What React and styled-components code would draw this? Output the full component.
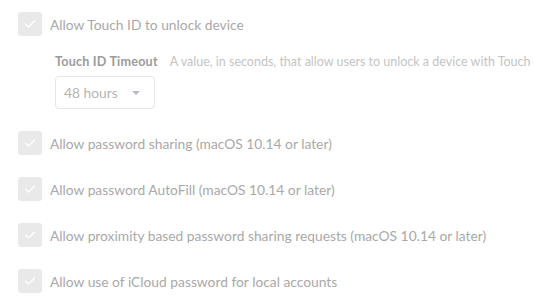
import { createGlobalStyle, styled } from "styled-components";

const Global = createGlobalStyle`
    body {
        margin: 0;
        background: #fff;
        font-family: Lato, "Open Sans", sans-serif;
    }
`;

const settings = [
    "Allow password sharing (macOS 10.14 or later)",
    "Allow password AutoFill (macOS 10.14 or later)",
    "Allow proximity based password sharing requests (macOS 10.14 or later)",
    "Allow use of iCloud password for local accounts",
];

const Check = () => (
    <Box>
        <svg width="12" height="10" viewBox="0 0 12 10">
            <path d="M1.5 5.2 L4.5 8 L10.5 2" fill="none" stroke="#fff" strokeWidth="1.3" strokeLinecap="round" strokeLinejoin="round" />
        </svg>
    </Box>
);

export default function App() {
    return (
        <>
            <Global />
            <Page>
                <Option>
                    <Check />
                    <Label>Allow Touch ID to unlock device</Label>
                </Option>
                <SubField>
                    <FieldHead>
                        <FieldName>Touch ID Timeout</FieldName>
                        <FieldHint>A value, in seconds, that allow users to unlock a device with Touch ID</FieldHint>
                    </FieldHead>
                    <Select>
                        <span>48 hours</span>
                        <Caret />
                    </Select>
                </SubField>
                {settings.map((s) => (
                    <Option key={s} $spaced>
                        <Check />
                        <Label>{s}</Label>
                    </Option>
                ))}
            </Page>
        </>
    );
}

const Page = styled.div`
    width: 534px;
    height: 302px;
    overflow: hidden;
    padding: 12px 0 0 18px;
    box-sizing: border-box;
`;

const Option = styled.div`
    display: flex;
    align-items: center;
    gap: 8px;
    height: 24px;
    margin-top: ${(p) => (p.$spaced ? "22px" : "0")};
`;

const Box = styled.div`
    width: 24px;
    height: 24px;
    border-radius: 3px;
    background: #e9e9e9;
    display: flex;
    align-items: center;
    justify-content: center;
    flex-shrink: 0;
`;

const Label = styled.span`
    font-size: 13.8px;
    color: #a9a9a9;
    white-space: nowrap;
`;

const SubField = styled.div`
    padding: 18px 0 0 37px;
    margin-bottom: 9px;
`;

const FieldHead = styled.div`
    display: flex;
    align-items: baseline;
    gap: 12px;
    white-space: nowrap;
    height: 16px;
`;

const FieldName = styled.span`
    font-size: 12.6px;
    font-weight: 700;
    color: #9b9b9b;
    letter-spacing: 0.2px;
`;

const FieldHint = styled.span`
    font-size: 12.5px;
    color: #c4c4c4;
`;

const Select = styled.div`
    margin-top: 6px;
    width: 100px;
    height: 33px;
    box-sizing: border-box;
    border: 1px solid #e6e6e6;
    border-radius: 4px;
    display: flex;
    align-items: center;
    justify-content: space-between;
    padding: 0 14px 0 8px;
    font-size: 13.8px;
    color: #b5b5b5;
`;

const Caret = styled.span`
    width: 0;
    height: 0;
    border-left: 4px solid transparent;
    border-right: 4px solid transparent;
    border-top: 4px solid #b9b9c4;
`;
